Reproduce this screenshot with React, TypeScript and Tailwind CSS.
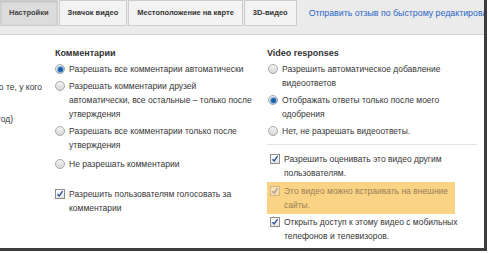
import React from 'react';

const tabs = ['Настройки', 'Значок видео', 'Местоположение на карте', '3D-видео'];

const Radio = ({ checked }: { checked?: boolean }) => (
  <span className="mt-[2px] flex h-[10px] w-[10px] shrink-0 items-center justify-center rounded-full border border-[#a8a8a8] bg-gradient-to-b from-[#f4f4f4] to-[#d6d6d6]">
    {checked && <span className="h-[5px] w-[5px] rounded-full bg-[#1d5fa8] shadow-[0_0_1px_1px_#7fb0e0]" />}
  </span>
);

const Check = ({ faded }: { faded?: boolean }) => (
  <span
    className={`mt-[2px] flex h-[10px] w-[10px] shrink-0 items-center justify-center border border-[#8c8c8c] bg-gradient-to-b from-[#ffffff] to-[#e4e4e4] ${
      faded ? 'opacity-40' : ''
    }`}
  >
    <svg width="8" height="8" viewBox="0 0 8 8">
      <path d="M1.5 4.2 L3.2 6 L6.6 1.2" fill="none" stroke="#2a4f9e" strokeWidth="1.4" />
    </svg>
  </span>
);

const Item = ({ children, control }: { children: React.ReactNode; control: React.ReactNode }) => (
  <div className="flex gap-[4px]">
    {control}
    <span>{children}</span>
  </div>
);

export default function App() {
  return (
    <div className="h-[253px] w-[489px] bg-white font-['Liberation_Sans',Arial,sans-serif] text-[8.5px] leading-[14px] text-[#363636]">
      <div className="flex h-[251px] w-[487px] flex-col overflow-hidden border-r-[3px] border-b-[3px] border-[#3c3c3c] bg-white">
        {/* вкладки */}
        <div className="flex h-[35px] shrink-0 items-start border-b border-[#d4d4d4] bg-[#ebebeb]">
          {tabs.map((t, i) => (
            <div
              key={t}
              className={`mr-[1px] flex h-[26px] items-center whitespace-nowrap border border-[#cdcdcd] px-[8px] text-[7.5px] font-bold ${
                i === 0 ? 'bg-[#dcdcdc] text-[#444] shadow-[inset_0_1px_2px_rgba(0,0,0,0.15)]' : 'bg-[#f3f3f3] text-[#333]'
              }`}
            >
              {t}
            </div>
          ))}
          <div className="ml-[11px] mt-[6px] whitespace-nowrap text-[8.8px] text-[#2a67c6]">
            Отправить отзыв по быстрому редактированию
          </div>
        </div>

        <div className="flex pt-[11px]">
          {/* обрезанная колонка слева */}
          <div className="w-[55px] shrink-0 pt-[34px]">
            <div className="flex w-[42px] justify-end overflow-hidden whitespace-nowrap">только те, у кого</div>
            <div className="mt-[18px] flex w-[13px] justify-end overflow-hidden whitespace-nowrap">(за последний год)</div>
          </div>

          {/* Комментарии */}
          <div className="w-[212px] shrink-0 pr-[11px]">
            <div className="mb-[2px] text-[9px] font-bold text-[#333]">Комментарии</div>
            <div className="flex flex-col gap-[3px]">
              <Item control={<Radio checked />}>Разрешать все комментарии автоматически</Item>
              <Item control={<Radio />}>
                Разрешать комментарии друзей автоматически, все остальные – только после утверждения
              </Item>
              <Item control={<Radio />}>Разрешать все комментарии только после утверждения</Item>
              <div className="mt-[2px]">
                <Item control={<Radio />}>Не разрешать комментарии</Item>
              </div>
            </div>
            <div className="mt-[16px]">
              <Item control={<Check />}>Разрешить пользователям голосовать за комментарии</Item>
            </div>
          </div>

          {/* Video responses */}
          <div className="w-[212px] shrink-0">
            <div className="mb-[2px] text-[9px] font-bold text-[#333]">Video responses</div>
            <div className="flex flex-col gap-[3px] pl-[1px] pr-[20px]">
              <Item control={<Radio />}>Разрешить автоматическое добавление видеоответов</Item>
              <Item control={<Radio checked />}>Отображать ответы только после моего одобрения</Item>
              <Item control={<Radio />}>Нет, не разрешать видеоответы.</Item>
            </div>
            <div className="mb-[5px] mt-[6px] mr-[2px] border-t border-[#e2e2e2]" />
            <div className="flex flex-col">
              <div className="py-[2px] pl-[3px] pr-[26px]">
                <Item control={<Check />}>Разрешить оценивать это видео другим пользователям.</Item>
              </div>
              <div className="mr-[24px] bg-[#fbd385] py-[2px] pl-[3px] text-[#9a8058]">
                <Item control={<Check faded />}>Это видео можно встраивать на внешние сайты.</Item>
              </div>
              <div className="py-[1px] pl-[3px] pr-[14px]">
                <Item control={<Check />}>Открыть доступ к этому видео с мобильных телефонов и телевизоров.</Item>
              </div>
            </div>
          </div>
        </div>
      </div>
    </div>
  );
}
